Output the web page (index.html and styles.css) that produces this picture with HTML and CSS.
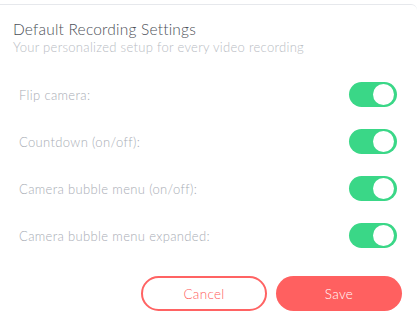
FILE: index.html
```html
<!DOCTYPE html>
<html lang="en">
<head>
  <meta charset="UTF-8" />
  <title>Default Recording Settings</title>
  <link rel="stylesheet" href="styles.css">
</head>
<body>
  <div class="settings-card">
    <div class="settings-head">
      <h2>Default Recording Settings</h2>
      <p>Your personalized setup for every video recording</p>
    </div>
    <div class="settings-list">
      <div class="setting-row">
        <span>Flip camera:</span>
        <label class="switch"><input type="checkbox" checked><span class="slider"></span></label>
      </div>
      <div class="setting-row">
        <span>Countdown (on/off):</span>
        <label class="switch"><input type="checkbox" checked><span class="slider"></span></label>
      </div>
      <div class="setting-row">
        <span>Camera bubble menu (on/off):</span>
        <label class="switch"><input type="checkbox" checked><span class="slider"></span></label>
      </div>
      <div class="setting-row">
        <span>Camera bubble menu expanded:</span>
        <label class="switch"><input type="checkbox" checked><span class="slider"></span></label>
      </div>
    </div>
    <div class="actions">
      <button class="cancel-btn">Cancel</button>
      <button class="save-btn">Save</button>
    </div>
  </div>
</body>
</html>
```

FILE: styles.css
```css
body {
  margin: 0;
  background: #fff;
  font-family: Lato, "Liberation Sans", sans-serif;
}
.settings-card {
  margin-top: 4px;
  border-top: 1px solid #e6e8ec;
  border-top-right-radius: 6px;
}
.settings-head {
  padding: 14px 13px 0;
}
.settings-head h2 {
  margin: 0;
  font-size: 15.5px;
  font-weight: 300;
  letter-spacing: 0.2px;
  color: #4c5058;
  line-height: 20px;
}
.settings-head p {
  margin: 0;
  font-size: 13px;
  font-weight: 300;
  letter-spacing: 0.3px;
  color: #b8bcc3;
  line-height: 16px;
}
.settings-list {
  padding: 16px 19px 0;
}
.setting-row {
  display: flex;
  align-items: center;
  justify-content: space-between;
  height: 47px;
  font-size: 13px;
  font-weight: 300;
  letter-spacing: 0.35px;
  color: #a9adb5;
}
.switch {
  position: relative;
  display: inline-block;
  width: 48px;
  height: 25px;
  margin-right: 1px;
}
.switch input {
  display: none;
}
.slider {
  position: absolute;
  inset: 0;
  background: #3ad787;
  border-radius: 13px;
}
.slider::after {
  content: "";
  position: absolute;
  top: 2px;
  right: 3px;
  width: 21px;
  height: 21px;
  border-radius: 50%;
  background: #fff;
}
.actions {
  display: flex;
  justify-content: flex-end;
  gap: 9px;
  padding: 17px 15px 0 0;
}
.actions button {
  width: 126px;
  height: 35px;
  border-radius: 18px;
  font-family: Lato, "Liberation Sans", sans-serif;
  font-size: 13.5px;
  font-weight: 300;
  letter-spacing: 0.3px;
  cursor: pointer;
}
.cancel-btn {
  background: #fff;
  border: 2px solid #ff6363;
  color: #ff5c5c;
}
.save-btn {
  background: #ff6060;
  border: none;
  color: #fff;
}
```
